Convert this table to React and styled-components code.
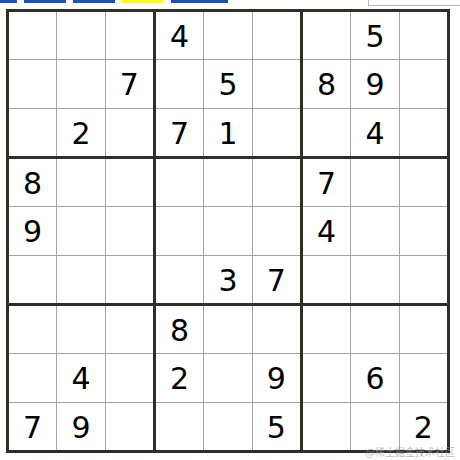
import React from 'react';
import styled, { createGlobalStyle } from 'styled-components';

const GlobalStyle = createGlobalStyle`
	html, body {
		margin: 0;
		padding: 0;
		background: #fff;
		font-family: "DejaVu Sans", Verdana, sans-serif;
	}
`;

const Page = styled.div`
	position: relative;
	width: 460px;
	height: 460px;
	overflow: hidden;
`;

const TopStrip = styled.div`
	display: flex;
	align-items: flex-start;
	gap: 7px;
	height: 6px;
	margin-left: -25px;
`;

const Bar = styled.div`
	width: ${(p) => p.$w || 42}px;
	height: 3px;
	background: ${(p) => (p.$active ? '#ffff00' : '#1c4fc4')};
`;

const InputEdge = styled.div`
	margin-left: auto;
	width: 91px;
	height: 5px;
	border-left: 1px solid #b5b5b5;
	border-bottom: 1px solid #b5b5b5;
`;

const Board = styled.div`
	display: grid;
	grid-template-columns: repeat(3, 1fr);
	gap: 3px;
	width: 444px;
	height: 444px;
	box-sizing: border-box;
	margin: 3px 0 0 6px;
	padding: 3px;
	background: #2e2f27;
`;

const Box = styled.div`
	display: grid;
	grid-template-columns: repeat(3, 1fr);
	grid-template-rows: repeat(3, 1fr);
	gap: 1px;
	background: #a3a3a3;
`;

const Cell = styled.div`
	display: flex;
	align-items: center;
	justify-content: center;
	padding-top: 3px;
	background: #fff;
	color: #000;
	font-size: 30px;
	line-height: 1;
`;

const Watermark = styled.span`
	position: absolute;
	right: 5px;
	bottom: 1px;
	font-family: "Noto Sans CJK SC", sans-serif;
	font-size: 10px;
	color: rgba(150, 150, 150, 0.7);
`;

const puzzle = [
	'...4...5.',
	'..7.5.89.',
	'.2.71..4.',
	'8.....7..',
	'9.....4..',
	'....37...',
	'...8.....',
	'.4.2.9.6.',
	'79...5..2',
];

const bars = [{}, {}, {}, { active: true }, { w: 57 }];

export default function App() {
	const boxes = [];
	for (let b = 0; b < 9; b++) {
		const br = Math.floor(b / 3) * 3;
		const bc = (b % 3) * 3;
		const cells = [];
		for (let i = 0; i < 9; i++) {
			const ch = puzzle[br + Math.floor(i / 3)][bc + (i % 3)];
			cells.push(<Cell key={i}>{ch === '.' ? '' : ch}</Cell>);
		}
		boxes.push(<Box key={b}>{cells}</Box>);
	}

	return (
		<Page>
			<GlobalStyle />
			<TopStrip>
				{bars.map((bar, i) => (
					<Bar key={i} $w={bar.w} $active={bar.active} />
				))}
				<InputEdge />
			</TopStrip>
			<Board>{boxes}</Board>
			<Watermark>@稀土掘金技术社区</Watermark>
		</Page>
	);
}
